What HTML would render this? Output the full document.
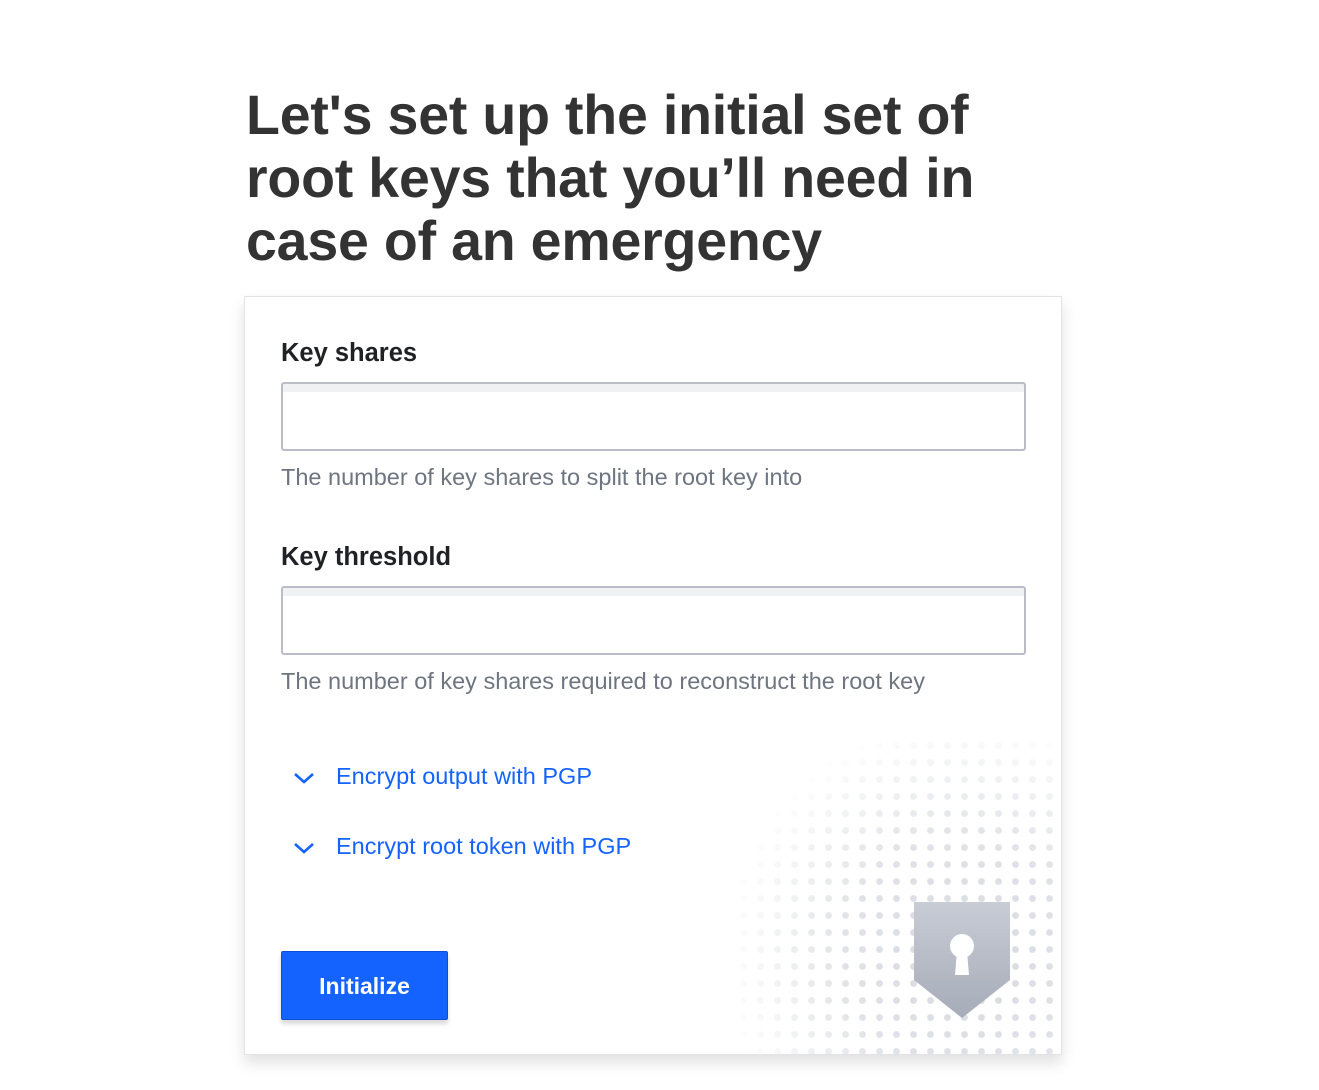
<!DOCTYPE html>
<html><head><meta charset="utf-8"><style>
*{box-sizing:border-box;margin:0;padding:0}
body{width:1319px;height:1090px;background:#fff;font-family:"Liberation Sans",sans-serif;position:relative;overflow:hidden}
h1{position:absolute;left:246px;top:84px;width:790px;font-size:55.5px;line-height:63px;font-weight:bold;color:#333;letter-spacing:-0.2px}
.card{position:absolute;left:244px;top:296px;width:818px;height:759px;border:1px solid #e2e3e6;box-shadow:0 8px 14px rgba(0,0,0,0.12);overflow:hidden;background:#fff}
.lbl{position:absolute;left:36px;font-size:25.5px;font-weight:bold;color:#1f2124}
.inp{position:absolute;left:36px;width:745px;height:69px;border:2px solid #babdc7;border-radius:3px;background:linear-gradient(#f0f1f3 0,#f0f1f3 8px,#fff 8px)}
.help{position:absolute;left:36px;font-size:23.5px;color:#6f7580}
.link{position:absolute;left:48px;font-size:23.5px;color:#1563ff}
.link svg{position:absolute;left:0;top:8px}
.link span{position:absolute;left:43px;white-space:nowrap}
.btn{position:absolute;left:36px;top:654px;width:167px;height:69px;background:#1563ff;border:1px solid #0e4fd6;border-radius:2px;color:#fff;font-weight:bold;font-size:23px;text-align:center;line-height:68px;box-shadow:0 4px 4px rgba(0,0,0,0.15)}
.dots{position:absolute;left:490px;top:440px;width:340px;height:330px;
background-image:radial-gradient(circle,#d6d9df 3px,transparent 3.8px);background-size:17px 17px;
-webkit-mask-image:radial-gradient(circle at 228px 220px,#000 0,rgba(0,0,0,.75) 120px,transparent 240px);mask-image:radial-gradient(circle at 228px 220px,#000 0,rgba(0,0,0,.75) 120px,transparent 240px)}
</style></head><body>
<h1>Let's set up the initial set of root keys that you’ll need in case of an emergency</h1>
<div class="card">
<div class="dots"></div>
<svg style="position:absolute;left:668px;top:604px" width="98" height="118" viewBox="0 0 98 118">
<defs><linearGradient id="g" x1="0" y1="0" x2="0" y2="1"><stop offset="0" stop-color="#c8ccd5"/><stop offset="1" stop-color="#a6acb8"/></linearGradient></defs>
<path d="M1 1H97V79L49 117L1 79Z" fill="url(#g)"/>
<circle cx="49" cy="45" r="12" fill="#fff"/><path d="M44 50H54L56 74H42Z" fill="#fff"/>
</svg>
<div class="lbl" style="top:42px">Key shares</div>
<div class="inp" style="top:85px"></div>
<div class="help" style="top:167px">The number of key shares to split the root key into</div>
<div class="lbl" style="top:246px">Key threshold</div>
<div class="inp" style="top:289px"></div>
<div class="help" style="top:371px">The number of key shares required to reconstruct the root key</div>
<div class="link" style="top:466px"><svg width="22" height="14" viewBox="0 0 22 14"><path d="M2 3L11 11L20 3" fill="none" stroke="#1563ff" stroke-width="2.6"/></svg><span>Encrypt output with PGP</span></div>
<div class="link" style="top:536px"><svg width="22" height="14" viewBox="0 0 22 14"><path d="M2 3L11 11L20 3" fill="none" stroke="#1563ff" stroke-width="2.6"/></svg><span>Encrypt root token with PGP</span></div>
<div class="btn">Initialize</div>
</div>
</body></html>
